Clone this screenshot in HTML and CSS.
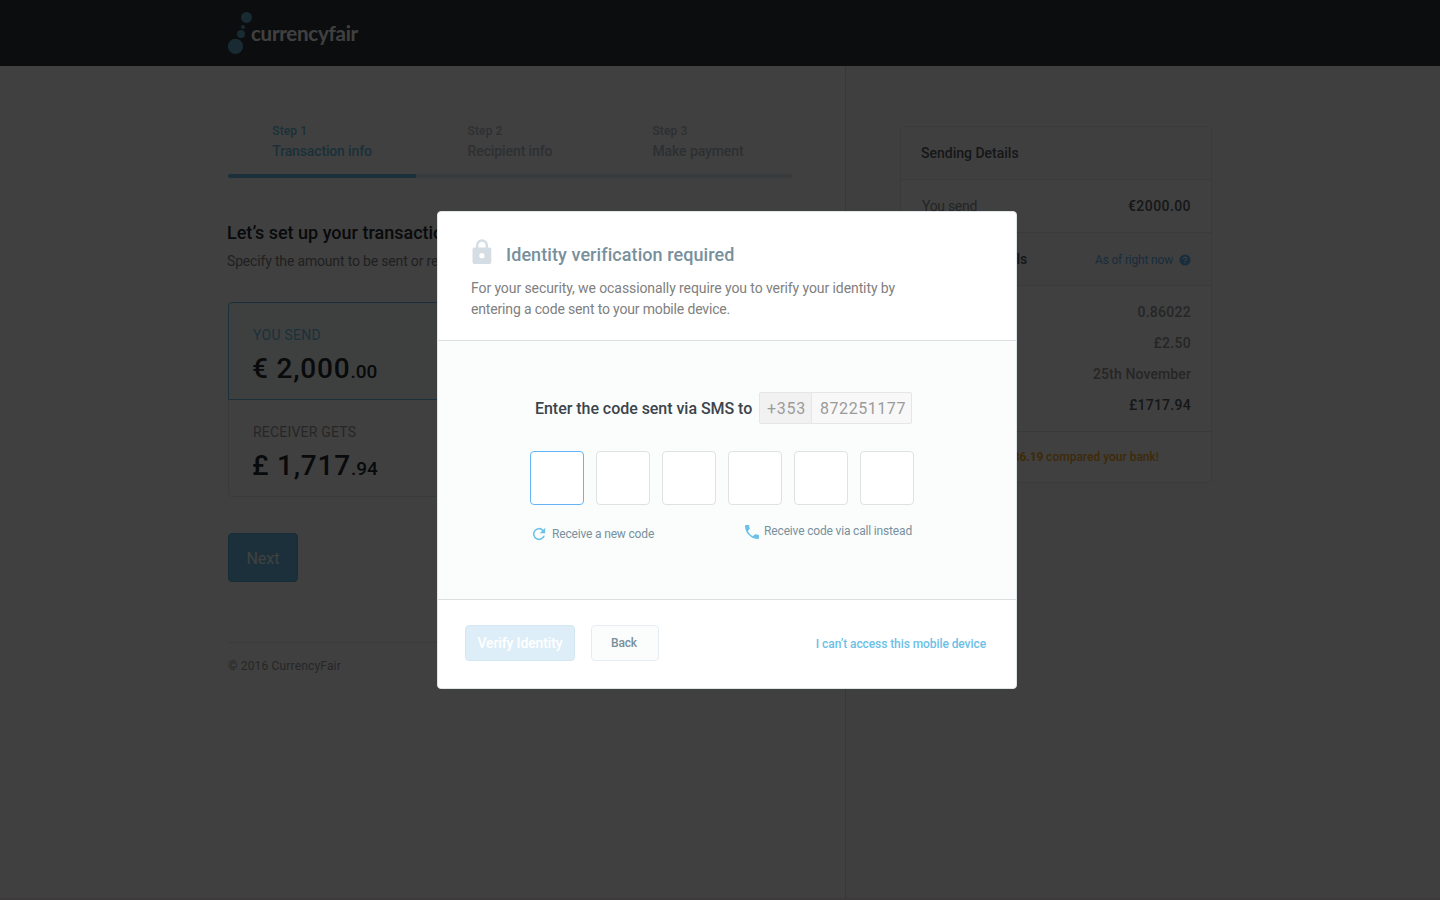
FILE: index.html
```html
<!DOCTYPE html>
<html lang="en">
<head>
<meta charset="utf-8">
<title>CurrencyFair</title>
<link rel="stylesheet" href="styles.css">
</head>
<body>
<div class="page">
  <header class="topbar">
    <svg class="logo-mark" width="26" height="44" viewBox="0 0 26 44"><circle cx="18.5" cy="6.4" r="5.5"/><circle cx="15" cy="16" r="2.1"/><circle cx="13" cy="22.9" r="4"/><circle cx="7.5" cy="35.4" r="7.6"/></svg>
    <span class="wordmark">currencyfair</span>
  </header>
  <div class="columns">
    <main class="main">
      <ol class="steps">
        <li class="step active"><div><span class="step-no">Step 1</span><span class="step-name tight">Transaction info</span></div></li>
        <li class="step"><div><span class="step-no">Step 2</span><span class="step-name">Recipient info</span></div></li>
        <li class="step"><div><span class="step-no">Step 3</span><span class="step-name">Make payment</span></div></li>
      </ol>
      <div class="progress"><div class="progress-fill"></div></div>
      <h1 class="title">Let’s set up your transaction</h1>
      <p class="subtitle">Specify the amount to be sent or received</p>
      <section class="amounts">
        <div class="amount selected">
          <span class="amount-label send">YOU SEND</span>
          <div class="amount-value"><span class="whole">€ 2,000</span><span class="cents">.00</span></div>
        </div>
        <div class="amount">
          <span class="amount-label">RECEIVER GETS</span>
          <div class="amount-value"><span class="whole">£ 1,717</span><span class="cents">.94</span></div>
        </div>
      </section>
      <button class="next">Next</button>
      <footer class="footer">© 2016 CurrencyFair</footer>
    </main>
    <aside class="side">
      <section class="summary">
        <div class="row head"><b>Sending Details</b></div>
        <div class="row"><span class="muted">You send</span><b class="num-wide">€2000.00</b></div>
        <div class="row head"><b class="exchange">Exchange Details</b><span class="now">As of right now
          <svg width="12" height="12" viewBox="0 0 12 12"><circle cx="6" cy="6" r="5.6" fill="#64b2ee"/><path d="M4.4 4.8a1.6 1.6 0 1 1 2.5 1.300c-.6.4-.9.6-.9 1.200" fill="none" stroke="#fafafa" stroke-width="1.200"/><rect x="5.400" y="8.100" width="1.200" height="1.200" fill="#fafafa"/></svg></span></div>
        <div class="figures">
          <div class="figure"><b class="num">0.86022</b></div>
          <div class="figure"><b class="num">£2.50</b></div>
          <div class="figure"><b class="date">25th November</b></div>
          <div class="figure total"><b class="num">£1717.94</b></div>
        </div>
        <div class="saving">You save <b>£36.19</b> compared your bank!</div>
      </section>
    </aside>
  </div>
</div>
<div class="overlay">
  <div class="modal">
    <div class="modal-head">
      <div class="modal-title">
        <svg width="20" height="27" viewBox="0 -1 20 27"><path d="M5.2 9.500V6.300a4.800 4.800 0 0 1 9.600 0v3.200" fill="none" stroke="#d5dde4" stroke-width="2.400"/><path fill-rule="evenodd" fill="#d5dde4" d="M2.300 8.500h15.200a1.800 1.800 0 0 1 1.800 1.800v13a1.800 1.800 0 0 1-1.800 1.800H2.300a1.800 1.800 0 0 1-1.800-1.800v-13a1.800 1.800 0 0 1 1.800-1.800zM9.900 14.100a2.600 2.600 0 1 0 0 5.200a2.600 2.600 0 0 0 0-5.200z"/></svg>
        <h2>Identity verification required</h2>
      </div>
      <p>For your security, we ocassionally require you to verify your identity by<br><span class="second">entering a code sent to your mobile device.</span></p>
    </div>
    <div class="modal-body">
      <div class="sms">
        <span class="sms-label">Enter the code sent via SMS to</span>
        <div class="phone"><span class="prefix">+353</span><span class="number">872251177</span></div>
      </div>
      <div class="code"><i class="digit focus"></i><i class="digit"></i><i class="digit"></i><i class="digit"></i><i class="digit"></i><i class="digit"></i></div>
      <div class="links">
        <a class="link resend"><svg width="14" height="14" viewBox="0 0 24 24"><path fill="#6cc0e8" d="M19.500 4.500A10.500 10.500 0 1 0 22.200 15h-2.900A7.800 7.800 0 1 1 17.500 6.500L13.200 10.800H22.600V1.400z"/></svg>Receive a new code</a>
        <a class="link call"><svg width="14" height="14" viewBox="3 3 18 18"><path fill="#6cc0e8" d="M6.620 10.790c1.440 2.830 3.760 5.140 6.590 6.590l2.200-2.200c.27-.27.67-.36 1.020-.24 1.120.37 2.330.57 3.570.57.55 0 1 .45 1 1V20c0 .55-.45 1-1 1-9.390 0-17-7.610-17-17 0-.55.45-1 1-1h3.500c.55 0 1 .45 1 1 0 1.250.2 2.450.57 3.570.11.35.03.74-.25 1.020z"/></svg>Receive code via call instead</a>
      </div>
    </div>
    <div class="modal-foot">
      <button class="verify">Verify Identity</button>
      <button class="back">Back</button>
      <a class="no-access">I can’t access this mobile device</a>
    </div>
  </div>
</div>
</body>
</html>
```
FILE: styles.css
```css
* { box-sizing: border-box; }
body { margin: 0; background: #fff; color: #26292c; font-family: Roboto, "Liberation Sans", sans-serif; font-size: 14px; line-height: 20px; }
h1, h2, p, ol { margin: 0; padding: 0; }
b { font-weight: 500; }
button { padding: 0; border: 0; font: inherit; }
.page { height: 900px; display: flex; flex-direction: column; overflow: hidden; border-bottom: 2px solid #efe6ea; }
.topbar { height: 66px; flex: none; padding: 11px 0 0 228px; display: flex; background: #33343b; }
.logo-mark { fill: #60a6c6; margin-right: -3px; }
.wordmark { color: #fff; font: 700 20.5px/26px Lato, sans-serif; letter-spacing: -.27px; margin-top: 9px; }
.columns { flex: 1; display: flex; }
.main { width: 845px; padding: 55px 53px 0 228px; }
.steps { list-style: none; display: grid; grid-template-columns: repeat(3, 1fr); height: 53px; }
.step { display: flex; justify-content: center; color: #b2bec6; }
.step span { display: block; }
.active { color: #6cc0e8; }
.step .step-no { font-size: 12px; font-weight: 500; letter-spacing: .13px; }
.step-name { font-weight: 500; letter-spacing: -.1px; }
.tight { letter-spacing: -.15px; }
.progress { height: 4px; border-radius: 2px; overflow: hidden; background: #e0ecf2; }
.progress-fill { width: 188px; height: 4px; background: #6cc0e8; }
.title { margin: 43px 0 0 -1px; font-size: 18px; line-height: 24px; font-weight: 500; white-space: nowrap; }
.subtitle { margin: 6px 0 0 -1px; color: #808080; letter-spacing: -.17px; white-space: nowrap; }
.amounts { margin-top: 31px; border: 1px solid #e3e6e8; border-radius: 4px; height: 195px; }
.amount { height: 97px; padding: 22px 0 0 24px; }
.selected { margin: -1px -1px 0; height: 98px; border: 1px solid #6cc0e8; border-radius: 4px 4px 0 0; background: #f8fdfd; }
.amount-label { display: block; color: #98989a; letter-spacing: .2px; }
.send { color: #6cc0e8; letter-spacing: .27px; }
.amount-value { display: flex; align-items: baseline; height: 48px; line-height: 48px; margin-left: -1px; }
.whole { font-size: 28px; font-weight: 500; letter-spacing: .8px; }
.cents { font-size: 19px; font-weight: 500; }
.next { display: block; margin-top: 36px; padding-top: 2px; width: 70px; height: 49px; border: 1px solid #5aaed6; border-radius: 4px; background: #6cc0e8; color: #fff; font-size: 16px; }
.footer { margin-top: 60px; border-top: 1px solid #e6e9eb; padding-top: 13px; color: #98989a; font-size: 12px; letter-spacing: .17px; }
.side { flex: 1; border-left: 1px solid #e0e0e0; background: #fafafa; padding: 60px 0 0 54px; }
.summary { width: 312px; height: 357px; border: 1px solid #e6e8ea; border-radius: 4px; background: #fff; color: #565c60; }
.row { height: 53px; padding: 0 20px; display: flex; align-items: center; justify-content: space-between; border-bottom: 1px solid #e6e8ea; }
.head { background: #fafafa; }
.exchange { letter-spacing: -.08px; }
.num { letter-spacing: .28px; }
.num-wide { letter-spacing: .43px; }
.date { letter-spacing: .12px; }
.muted { color: #909294; letter-spacing: -.3px; margin-left: 1px; }
.now { display: flex; align-items: center; gap: 6px; color: #64b2ee; font-size: 12px; letter-spacing: -.18px; padding-top: 1px; }
.figures { height: 146px; padding: 10px 20px; border-bottom: 1px solid #e0e3e5; }
.figure { height: 31px; display: flex; align-items: center; justify-content: flex-end; color: #96989a; }
.total { color: #565c60; }
.saving { padding: 15px 52px 0 0; text-align: right; font-size: 12px; font-weight: 500; color: #f5a623; }
.saving b { font-weight: 700; letter-spacing: -.15px; }
.overlay { position: absolute; inset: 0; background: rgba(0, 0, 0, .75); }
.modal { position: absolute; left: 437px; top: 211px; width: 580px; height: 478px; border: 1px solid #dfe4e6; border-radius: 4px; background: #fff; overflow: hidden; }
.modal-head { height: 129px; padding: 26px 33px 0; border-bottom: 1px solid #dcdfe1; }
.modal-title { display: flex; gap: 14px; padding-left: 1px; height: 40px; }
.modal-title h2 { font-size: 18px; line-height: 24px; margin-top: 5px; font-weight: 500; letter-spacing: .08px; color: #78909c; }
.modal-head p { color: #808080; letter-spacing: -.09px; line-height: 21px; white-space: nowrap; }
.second { letter-spacing: -.16px; }
.modal-body { height: 259px; background: #fbfdfd; border-bottom: 1px solid #dcdfe1; padding: 51px 104px 0 92px; }
.sms { display: flex; align-items: center; padding-left: 5px; height: 32px; }
.sms-label { flex: none; width: 217px; font-size: 16px; font-weight: 500; letter-spacing: -.04px; color: #3c444b; margin-right: 7px; padding-top: 2px; white-space: nowrap; }
.phone { flex: none; display: flex; width: 153px; height: 32px; border: 1px solid #e6e6e6; border-radius: 2px; background: #f8f8f8; color: #9b9b9b; font-size: 16px; line-height: 31px; }
.prefix { width: 52px; padding-left: 7px; background: #f1f1f1; border-right: 1px solid #e6e6e6; letter-spacing: .73px; }
.number { padding-left: 8px; letter-spacing: .56px; }
.code { display: flex; gap: 12px; margin-top: 27px; }
.digit { flex: none; width: 54px; height: 54px; border: 1px solid #dfe1e3; border-radius: 4px; background: #fff; }
.focus { border-color: #64b5f6; }
.links { display: flex; justify-content: space-between; padding: 16px 0 0 2px; font-size: 12px; letter-spacing: -.17px; color: #78909c; }
.link { display: flex; align-items: center; height: 20px; white-space: nowrap; }
.link svg { margin-right: 6px; }
.resend { margin-top: 3px; }
.call svg { margin: 2px 5px 0 0; }
.modal-foot { display: flex; align-items: center; padding: 25px 30px 0 27px; }
.verify { width: 110px; height: 36px; border: 1px solid #d3e8f2; border-radius: 4px; background: #ddeef8; color: #fff; font-size: 14px; font-weight: 500; letter-spacing: -.13px; }
.back { width: 68px; height: 36px; margin-left: 16px; padding-right: 2px; border: 1px solid #e6edf2; border-radius: 4px; background: #fbfdfd; color: #78909c; font-size: 12px; font-weight: 500; letter-spacing: -.14px; }
.no-access { margin-left: auto; padding-top: 2px; font-size: 12px; font-weight: 500; letter-spacing: -.08px; color: #6cc0e8; }
```
